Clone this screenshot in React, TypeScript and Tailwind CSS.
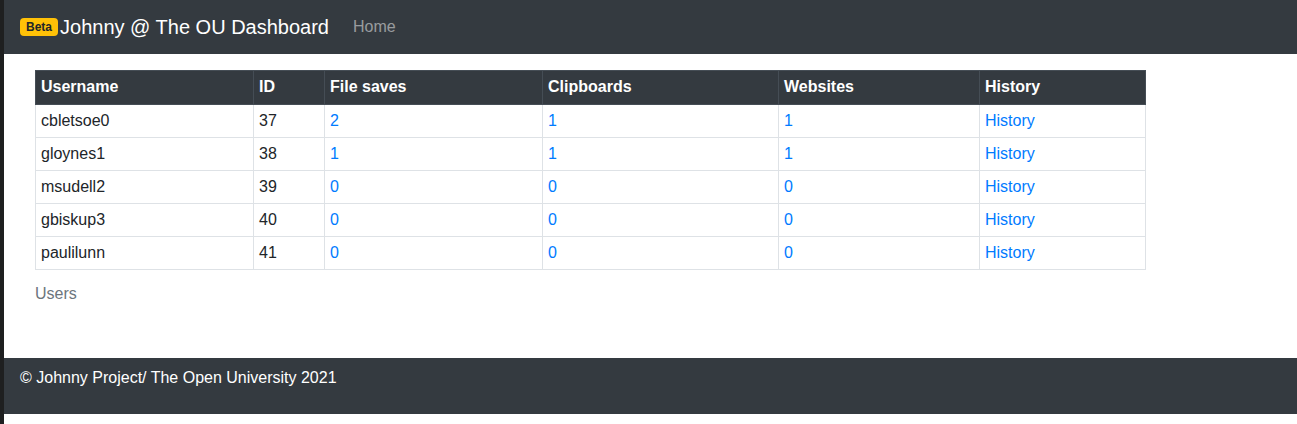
import { Fragment } from 'react'

type Row = { username: string; id: number; files: number; clips: number; sites: number }

const ROWS: Row[] = [
  { username: 'cbletsoe0', id: 37, files: 2, clips: 1, sites: 1 },
  { username: 'gloynes1', id: 38, files: 1, clips: 1, sites: 1 },
  { username: 'msudell2', id: 39, files: 0, clips: 0, sites: 0 },
  { username: 'gbiskup3', id: 40, files: 0, clips: 0, sites: 0 },
  { username: 'paulilunn', id: 41, files: 0, clips: 0, sites: 0 },
]

const COLS = [
  { label: 'Username', w: 'w-[218px]' },
  { label: 'ID', w: 'w-[71px]' },
  { label: 'File saves', w: 'w-[218px]' },
  { label: 'Clipboards', w: 'w-[236px]' },
  { label: 'Websites', w: 'w-[201px]' },
  { label: 'History', w: 'w-[166px]' },
]

export default function App() {
  return (
    <div
      className="flex min-h-[424px] bg-white text-[16px] text-[#212529]"
      style={{ fontFamily: '"Liberation Sans", Arial, sans-serif' }}
    >
      {/* window edge */}
      <div className="w-[4px] shrink-0 bg-[#1e1f20]" />

      <div className="flex-1 flex flex-col">
        {/* Navbar */}
        <nav className="h-[54px] bg-[#343a40] flex items-center px-4">
          <a className="flex items-center text-white text-[20px] mr-4">
            <span className="inline-block bg-[#ffc107] text-[#212529] text-[12px] font-bold leading-none px-[6px] pt-[3px] pb-[3px] rounded-[4px] mr-[2px]">
              Beta
            </span>
            Johnny @ The OU Dashboard
          </a>
          <a className="px-2 text-[rgba(255,255,255,0.5)]">Home</a>
        </nav>

        {/* Content */}
        <main className="pl-[31px] pt-4 h-[304px]">
          <table className="border-collapse w-[1110px] table-fixed">
            <thead>
              <tr className="bg-[#343a40] text-white">
                {COLS.map((c) => (
                  <th
                    key={c.label}
                    className={`${c.w} text-left font-bold border border-[#454d55] px-[5px] pt-[4px] pb-[5px] leading-6`}
                  >
                    {c.label}
                  </th>
                ))}
              </tr>
            </thead>
            <tbody>
              {ROWS.map((r) => (
                <Fragment key={r.id}>
                  <tr>
                    <td className="border border-[#dee2e6] px-[5px] py-[4px] leading-6">{r.username}</td>
                    <td className="border border-[#dee2e6] px-[5px] py-[4px] leading-6">{r.id}</td>
                    <td className="border border-[#dee2e6] px-[5px] py-[4px] leading-6 text-[#007bff]">{r.files}</td>
                    <td className="border border-[#dee2e6] px-[5px] py-[4px] leading-6 text-[#007bff]">{r.clips}</td>
                    <td className="border border-[#dee2e6] px-[5px] py-[4px] leading-6 text-[#007bff]">{r.sites}</td>
                    <td className="border border-[#dee2e6] px-[5px] py-[4px] leading-6 text-[#007bff]">History</td>
                  </tr>
                </Fragment>
              ))}
            </tbody>
          </table>
          <p className="pt-3 leading-6 text-[#6c757d]">Users</p>
        </main>

        {/* Footer */}
        <footer className="h-[56px] bg-[#343a40] text-white px-4 pt-[8px] leading-6">
          © Johnny Project/ The Open University 2021
        </footer>
        <div className="flex-1 bg-white" />
      </div>
    </div>
  )
}
